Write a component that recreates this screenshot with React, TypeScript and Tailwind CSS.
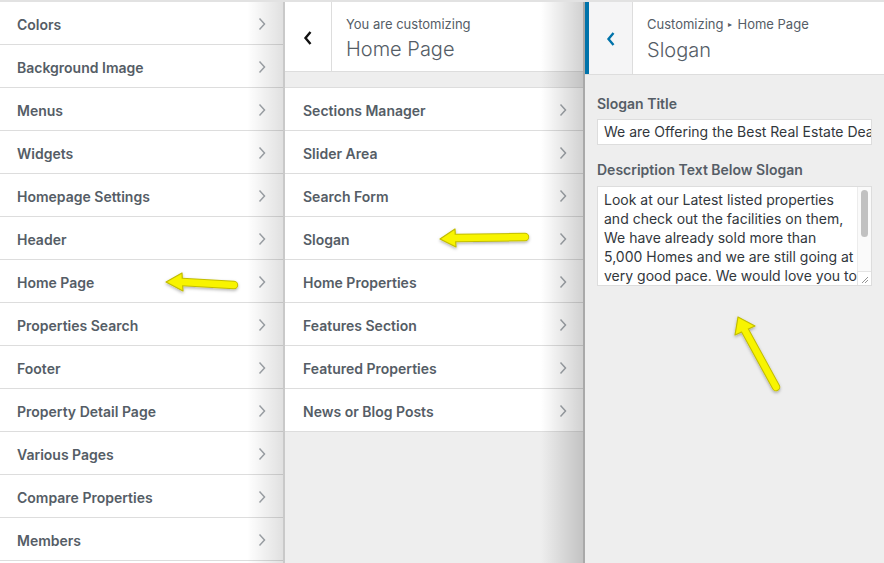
import React from "react";

const Chevron = () => (
  <svg width="8" height="14" viewBox="0 0 8 14" className="shrink-0">
    <path d="M1.5 1.5 L6.5 7 L1.5 12.5" fill="none" stroke="#a0a5aa" strokeWidth="1.5" />
  </svg>
);

const Row = ({ label, first, pl, pr }: { label: string; first?: boolean; pl: string; pr: string }) => (
  <div
    className={`flex h-[43px] items-center justify-between border-b border-[#dddddd] bg-white pt-[2px] text-[14px] font-semibold text-[#555d66] ${pl} ${pr} ${first ? "border-t h-[44px]" : ""}`}
  >
    <span>{label}</span>
    <Chevron />
  </div>
);

const left = [
  "Colors",
  "Background Image",
  "Menus",
  "Widgets",
  "Homepage Settings",
  "Header",
  "Home Page",
  "Properties Search",
  "Footer",
  "Property Detail Page",
  "Various Pages",
  "Compare Properties",
  "Members",
];

const mid = [
  "Sections Manager",
  "Slider Area",
  "Search Form",
  "Slogan",
  "Home Properties",
  "Features Section",
  "Featured Properties",
  "News or Blog Posts",
];

const Arrow = ({ tail, tip, h1, h2 }: { tail: [number, number]; tip: [number, number]; h1: [number, number]; h2: [number, number] }) => {
  const base: [number, number] = [(h1[0] + h2[0]) / 2, (h1[1] + h2[1]) / 2];
  return (
    <g filter="url(#sh)">
      <line x1={tail[0]} y1={tail[1]} x2={base[0]} y2={base[1]} stroke="#c2bd00" strokeWidth="8.5" strokeLinecap="round" />
      <polygon
        points={`${tip[0]},${tip[1]} ${h1[0]},${h1[1]} ${h2[0]},${h2[1]}`}
        fill="#f8f400"
        stroke="#c2bd00"
        strokeWidth="1.2"
        strokeLinejoin="round"
      />
      <line x1={tail[0]} y1={tail[1]} x2={base[0]} y2={base[1]} stroke="#f8f400" strokeWidth="6.5" strokeLinecap="round" />
    </g>
  );
};

export default function App() {
  return (
    <div
      className="relative flex h-[563px] w-[884px] flex-col overflow-hidden bg-[#eeeeee]"
      style={{ fontFamily: "Inter, 'Noto Sans', sans-serif" }}
    >
      <div className="h-[2px] w-full shrink-0 bg-[#e2e2e2]" />
      <div className="flex min-h-0 flex-1">
        {/* Panel 1 */}
        <div className="relative w-[285px] shrink-0 border-r-2 border-[#c9c9c9] bg-white">
          {left.map((l) => (
            <Row key={l} label={l} pl="pl-[17px]" pr="pr-[17px]" />
          ))}
          <div className="pointer-events-none absolute right-0 top-0 bottom-0 w-[36px] bg-linear-to-r from-black/0 to-black/12" />
        </div>

        {/* Panel 2 */}
        <div className="relative flex w-[300px] shrink-0 flex-col border-r-2 border-[#a9a9a9] bg-[#eeeeee]">
          <div className="flex h-[70px] border-b border-[#dddddd] bg-white">
            <div className="flex w-[47px] items-center justify-center border-r border-[#dddddd] pt-[2px]">
              <svg width="10" height="16" viewBox="0 0 10 16">
                <path d="M7.5 2 L2.5 8 L7.5 14" fill="none" stroke="#111111" strokeWidth="2.4" />
              </svg>
            </div>
            <div className="flex flex-col justify-center pl-[14px] pt-[2px]">
              <div className="text-[13px] leading-[18px] text-[#555d66]">You are customizing</div>
              <div className="mt-[4px] text-[20px] font-light leading-[24px] text-[#555d66]">Home Page</div>
            </div>
          </div>
          <div className="h-[15px]" />
          <div>
            {mid.map((l, i) => (
              <Row key={l} label={l} first={i === 0} pl="pl-[18px]" pr="pr-[16px]" />
            ))}
          </div>
          <div className="pointer-events-none absolute right-0 top-0 bottom-0 w-[42px] bg-linear-to-r from-black/0 to-black/18" />
        </div>

        {/* Panel 3 */}
        <div className="flex min-w-0 flex-1 flex-col bg-[#eeeeee]">
          <div className="flex h-[73px] border-b border-[#dddddd] bg-white">
            <div className="flex w-[48px] items-center justify-center border-l-4 border-r border-l-[#0073aa] border-r-[#dddddd] bg-[#f5f5f6] pt-[2px]">
              <svg width="10" height="16" viewBox="0 0 10 16">
                <path d="M7.5 2 L2.5 8 L7.5 14" fill="none" stroke="#0073aa" strokeWidth="2.4" />
              </svg>
            </div>
            <div className="flex flex-col justify-center pl-[14px] pt-[1px]">
              <div className="flex items-center text-[13px] leading-[18px] text-[#555d66]">
                Customizing
                <span className="mx-[5px] text-[8px]">▸</span>
                Home Page
              </div>
              <div className="mt-[5px] text-[20px] font-light leading-[24px] text-[#555d66]">Slogan</div>
            </div>
          </div>
          <div className="px-[12px] pt-[20px]">
            <div className="text-[14px] font-semibold leading-[18px] text-[#555d66]">Slogan Title</div>
            <div className="mt-[6px] h-[26px] overflow-hidden whitespace-nowrap border border-[#dddddd] bg-white pl-[6px] text-[14px] leading-[24px] text-[#32373c]">
              We are Offering the Best Real Estate Deals
            </div>
            <div className="mt-[16px] text-[14px] font-semibold leading-[18px] text-[#555d66]">Description Text Below Slogan</div>
            <div className="relative mt-[7px] h-[100px] overflow-hidden border border-[#dddddd] bg-white pl-[6px] pt-[3px] text-[14px] leading-[19px] text-[#32373c]">
              <div className="whitespace-nowrap">Look at our Latest listed properties</div>
              <div className="whitespace-nowrap">and check out the facilities on them,</div>
              <div className="whitespace-nowrap">We have already sold more than</div>
              <div className="whitespace-nowrap">5,000 Homes and we are still going at</div>
              <div className="whitespace-nowrap">very good pace. We would love you to</div>
              <div className="absolute right-0 top-0 bottom-0 w-[14px] border-l border-[#ececec] bg-[#fafafa]">
                <div className="mx-auto mt-[3px] h-[47px] w-[7px] rounded-full bg-[#c1c1c1]" />
              </div>
              <div className="absolute right-0 bottom-0 h-[14px] w-[14px] border-l border-t border-[#e4e4e4] bg-white">
                <svg width="13" height="13" viewBox="0 0 13 13">
                  <path d="M10 5 L4 11 M10 8 L7 11" stroke="#888" strokeWidth="0.9" />
                </svg>
              </div>
            </div>
          </div>
        </div>
      </div>

      <svg className="pointer-events-none absolute left-0 top-0" width="884" height="563">
        <defs>
          <filter id="sh" x="-20%" y="-50%" width="140%" height="200%">
            <feDropShadow dx="0" dy="1.5" stdDeviation="1.5" floodColor="#000" floodOpacity="0.3" />
          </filter>
        </defs>
        <Arrow tail={[234, 285]} tip={[166, 282]} h1={[182, 273]} h2={[183, 291]} />
        <Arrow tail={[525, 237]} tip={[440, 239]} h1={[455, 229]} h2={[456, 247]} />
        <Arrow tail={[776, 387]} tip={[738, 317]} h1={[735, 335]} h2={[755, 326]} />
      </svg>
    </div>
  );
}
